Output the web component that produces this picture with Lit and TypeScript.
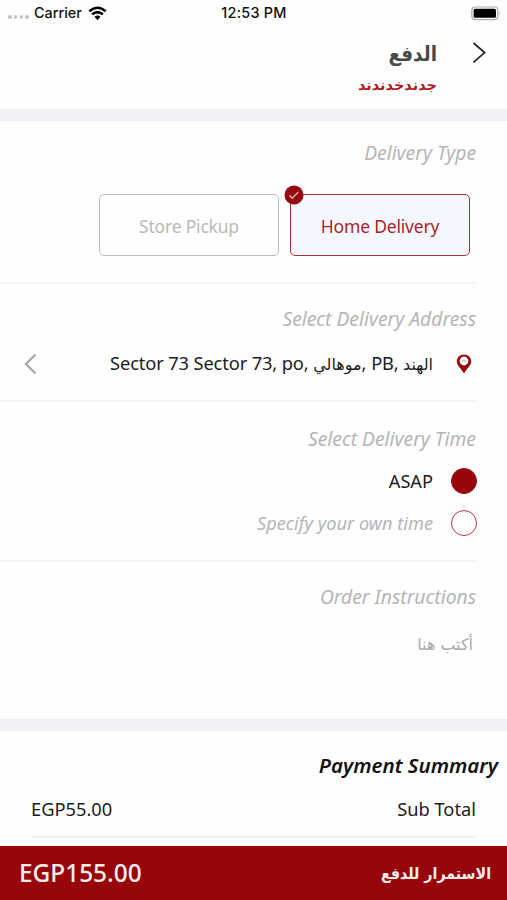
import { LitElement, html, css } from "lit";
import { customElement, property } from "lit/decorators.js";

@customElement("status-bar")
class StatusBar extends LitElement {
  static styles = css`
    :host { display: grid; grid-template-columns: 1fr auto 1fr; align-items: center; height: 26px; padding: 0 6px 0 8px; font: 500 14.4px/26px Inter, sans-serif; color: #111; }
    .left { display: flex; align-items: center; }
    .dots { display: flex; gap: 2.2px; margin: 8px 5px 0 0; }
    .dots i { width: 3.6px; height: 3.6px; border-radius: 50%; background: #c4c4c4; }
    .wifi { margin-left: 6px; }
    .time { letter-spacing: .25px; margin-right: 1px; }
    .battery { justify-self: end; }
    svg { display: block; }
  `;
  render() {
    return html`
      <div class="left">
        <span class="dots"><i></i><i></i><i></i><i></i></span>
        <span>Carrier</span>
        <svg class="wifi" width="19" height="15" viewBox="0 0 19 15">
          <path d="M1.3 5.2Q9.5-1.8 17.7 5.2M4.1 8.4Q9.5 3.8 14.9 8.4" fill="none" stroke="#000" stroke-width="2.5" />
          <path d="M6.5 10.8Q9.5 8.4 12.5 10.8L9.5 14.2Z" />
        </svg>
      </div>
      <span class="time">12:53 PM</span>
      <svg class="battery" width="30" height="15" viewBox="0 0 30 15">
        <rect x=".8" y="1" width="26" height="12.6" rx="3.4" fill="#fff" stroke="#aaa" stroke-width="1.2" />
        <rect x="2.6" y="2.8" width="22.4" height="9" rx="1.6" />
        <path d="M28.2 5.2Q30 7.3 28.2 9.4Z" fill="#999" />
      </svg>
    `;
  }
}

@customElement("type-option")
class TypeOption extends LitElement {
  @property() label = "";
  @property({ type: Boolean, reflect: true }) selected = false;
  static styles = css`
    :host { position: relative; display: flex; align-items: center; justify-content: center; box-sizing: border-box; width: 180px; height: 62px; padding-top: 1px; border: 1.5px solid #bcbcbc; border-radius: 5px; color: #b9b9b9; font-size: 17.5px; letter-spacing: -.2px; }
    :host([selected]) { border-color: #ac3137; background: #f4f8fe; color: #ac1f28; }
    .check { position: absolute; left: -7px; top: -10px; }
  `;
  render() {
    return html`<span>${this.label}</span>${this.selected
      ? html`<svg class="check" width="20" height="20" viewBox="0 0 20 20"><circle cx="10" cy="10" r="9.5" fill="#98060b" /><path d="M5.5 10.5L8.3 13.2L14.4 6.9" fill="none" stroke="#f3d5d6" stroke-width="1.1" /></svg>`
      : null}`;
  }
}

@customElement("app-root")
class AppRoot extends LitElement {
  static styles = css`
    :host { display: flex; flex-direction: column; height: 900px; overflow: hidden; background: #fefefe; color: #1c1c1e; font: 18.2px/26px "Noto Sans", "DejaVu Sans", sans-serif; white-space: nowrap; }
    svg { display: block; flex: none; }
    .header { display: flex; justify-content: flex-end; height: 83px; box-sizing: border-box; padding: 12px 20px 0 0; }
    .titles { display: flex; flex-direction: column; align-items: flex-end; margin-right: 35px; }
    .title { font: bold 20.5px/30px "DejaVu Sans Condensed", "DejaVu Sans", sans-serif; font-stretch: condensed; margin-top: 1px; color: #48484b; }
    .store { font: bold 14.5px/24px "DejaVu Sans", sans-serif; margin-top: 4px; color: #ad1a21; }
    .back { margin-top: 4px; }
    .band { flex: none; height: 12px; background: #f0f0f5; }
    .section { box-sizing: border-box; display: flex; flex-direction: column; align-items: flex-end; margin-right: 31px; border-bottom: 2px solid #f4f4f5; }
    .label { font-size: 19.3px; font-style: italic; color: #b5b5b5; }
    .own { font-size: 18.2px; }
    .type { height: 163px; padding-top: 19px; }
    .options { display: flex; gap: 11px; margin: 28px 6px 0 0; }
    .address { height: 118px; padding-top: 22px; }
    .row { display: flex; align-items: center; }
    .address .row { align-self: stretch; justify-content: space-between; margin: 18px 4px 0 24px; }
    .place { display: flex; align-items: center; gap: 23px; font-size: 18.3px; letter-spacing: -.13px; }
    .ar { font-family: "DejaVu Sans", sans-serif; font-size: 16px; letter-spacing: 0; }
    .time { height: 160px; padding-top: 24px; }
    .choice { gap: 18px; height: 26px; margin-top: 16px; }
    .choice + .choice { margin-top: 16px; }
    .radio { box-sizing: border-box; width: 26px; height: 26px; margin-right: -1px; border: 1.4px solid #b8373d; border-radius: 50%; }
    .radio.on { background: #98060b; border-color: #98060b; }
    .notes { height: 157px; padding-top: 22px; border: 0; }
    .hint { font: 16px/26px "DejaVu Sans", sans-serif; margin: 22px 3px 0 0; color: #aaa; }
    .summary { height: 115px; display: flex; flex-direction: column; }
    .heading { align-self: flex-end; margin: 21px 9px 0 0; font-size: 20.5px; font-style: italic; font-weight: 600; color: #111; }
    .total { justify-content: space-between; margin: 18px 31px 0; padding-bottom: 14px; border-bottom: 2px solid #f1f1f2; font-size: 18.3px; }
    .pay { display: flex; justify-content: space-between; align-items: center; height: 54px; padding: 0 16px 0 19px; background: #96060b; color: #fdecec; }
    .amount { font-size: 24.4px; font-weight: 500; }
    .proceed { font: bold 15.8px/26px "DejaVu Sans Condensed", "DejaVu Sans", sans-serif; font-stretch: condensed; padding-top: 2px; }
  `;
  render() {
    return html`
      <status-bar></status-bar>
      <div class="header">
        <div class="titles"><span class="title" dir="rtl">الدفع</span><span class="store" dir="rtl">جدندخدندند</span></div>
        <svg class="back" width="15" height="22" viewBox="0 0 15 22"><path d="M1.5 1L12.6 10.6L1.5 20.4" fill="none" stroke="#222" stroke-width="1.7" /></svg>
      </div>
      <div class="band"></div>
      <div class="section type">
        <span class="label">Delivery Type</span>
        <div class="options"><type-option label="Store Pickup"></type-option><type-option label="Home Delivery" selected></type-option></div>
      </div>
      <div class="section address">
        <span class="label">Select Delivery Address</span>
        <div class="row">
          <svg width="13" height="22" viewBox="0 0 13 22"><path d="M11.5 1.5L2 11L11.5 20.5" fill="none" stroke="#aaa" stroke-width="2.4" /></svg>
          <div class="place">
            <span>Sector 73 Sector 73, po, <span class="ar">موهالي</span>, PB, <span class="ar">الهند</span></span>
            <svg width="16" height="20" viewBox="0 0 16 20"><path d="M8 .4C3.8.4.8 3.4.8 7.2C.8 11.5 5.4 14.5 8 19.6C10.6 14.5 15.2 11.5 15.2 7.2C15.2 3.4 12.2.4 8 .4Z" fill="#98060b" /><circle cx="8" cy="7" r="4.4" fill="#fff" /><path d="M6 7H10" stroke="#c99" stroke-width="1" /></svg>
          </div>
        </div>
      </div>
      <div class="section time">
        <span class="label">Select Delivery Time</span>
        <div class="row choice"><span>ASAP</span><i class="radio on"></i></div>
        <div class="row choice"><span class="label own">Specify your own time</span><i class="radio"></i></div>
      </div>
      <div class="section notes">
        <span class="label">Order Instructions</span>
        <span class="hint" dir="rtl">أكتب هنا</span>
      </div>
      <div class="band"></div>
      <div class="summary">
        <span class="heading">Payment Summary</span>
        <div class="row total"><span>EGP55.00</span><span>Sub Total</span></div>
      </div>
      <div class="pay"><span class="amount">EGP155.00</span><span class="proceed" dir="rtl">الاستمرار للدفع</span></div>
    `;
  }
}
